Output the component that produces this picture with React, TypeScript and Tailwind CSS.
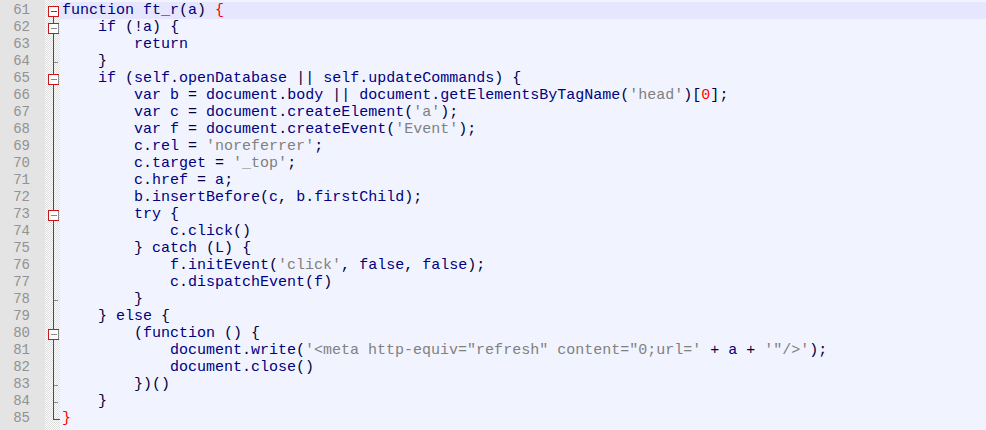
import React from "react";

const LINES: string[] = [
  "function ft_r(a) {",
  "    if (!a) {",
  "        return",
  "    }",
  "    if (self.openDatabase || self.updateCommands) {",
  "        var b = document.body || document.getElementsByTagName('head')[0];",
  "        var c = document.createElement('a');",
  "        var f = document.createEvent('Event');",
  "        c.rel = 'noreferrer';",
  "        c.target = '_top';",
  "        c.href = a;",
  "        b.insertBefore(c, b.firstChild);",
  "        try {",
  "            c.click()",
  "        } catch (L) {",
  "            f.initEvent('click', false, false);",
  "            c.dispatchEvent(f)",
  "        }",
  "    } else {",
  "        (function () {",
  "            document.write('<meta http-equiv=\"refresh\" content=\"0;url=' + a + '\"/>');",
  "            document.close()",
  "        })()",
  "    }",
  "}",
];

type Fold = "top" | "box" | "line" | "tick" | "end";
const FOLDS: Fold[] = [
  "top", "box", "line", "tick", "box", "line", "line", "line", "line", "line", "line", "line",
  "box", "line", "line", "line", "line", "tick", "line", "box", "line", "line", "tick", "tick", "end",
];

const RED = "#c81818";
const GREY = "#8a8a8a";

function FoldMark({ kind }: { kind: Fold }) {
  return (
    <svg width="15" height="17" viewBox="0 0 15 17" className="block" shapeRendering="crispEdges">
      {kind === "top" && (
        <>
          <rect x="3.5" y="4.5" width="10" height="10" fill="#ffffff" stroke={RED} />
          <line x1="6" y1="9.5" x2="11.5" y2="9.5" stroke={RED} />
          <line x1="8.5" y1="15" x2="8.5" y2="17" stroke={RED} />
        </>
      )}
      {kind === "box" && (
        <>
          <line x1="8.5" y1="0" x2="8.5" y2="4.5" stroke={RED} />
          <rect x="3.5" y="4.5" width="10" height="10" fill="#ffffff" stroke={GREY} />
          <path d="M13.5 4.5 H3.5 V14.5 H13.5" fill="none" stroke={RED} />
          <line x1="6" y1="9.5" x2="11.5" y2="9.5" stroke={GREY} />
          <line x1="8.5" y1="15" x2="8.5" y2="17" stroke={RED} />
        </>
      )}
      {(kind === "line" || kind === "tick") && (
        <line x1="8.5" y1="0" x2="8.5" y2="17" stroke={RED} />
      )}
      {kind === "tick" && <line x1="9" y1="9.5" x2="13" y2="9.5" stroke={GREY} />}
      {kind === "end" && <path d="M8.5 0 V9.5 H15" fill="none" stroke={RED} />}
    </svg>
  );
}

function tokenize(line: string) {
  const re = /('[^']*')|(\d+)|([A-Za-z_$][\w$]*)|(\s+)|(.)/g;
  const out: { t: string; k: string }[] = [];
  let m: RegExpExecArray | null;
  while ((m = re.exec(line))) {
    if (m[1]) out.push({ t: m[1], k: "str" });
    else if (m[2]) out.push({ t: m[2], k: "num" });
    else if (m[3]) out.push({ t: m[3], k: "id" });
    else if (m[4]) out.push({ t: m[4], k: "ws" });
    else out.push({ t: m[5], k: "op" });
  }
  return out;
}

const CLS: Record<string, string> = {
  str: "text-[#808080]",
  num: "text-[#ff0000]",
  id: "text-[#000080]",
  ws: "",
  op: "text-[#000040]",
  brace: "text-[#ff0000]",
};

function CodeLine({ line, idx }: { line: string; idx: number }) {
  const toks = tokenize(line);
  const last = toks.length - 1;
  return (
    <div
      className={
        idx === 0
          ? "h-[17px] whitespace-pre pl-[2px] bg-[#e6e6ff]"
          : "h-[17px] whitespace-pre pl-[2px]"
      }
    >
      {toks.map((tk, i) => {
        const isMatch = (idx === 0 || idx === 24) && i === last && (tk.t === "{" || tk.t === "}");
        return (
          <span key={i} className={isMatch ? CLS.brace : CLS[tk.k]}>
            {tk.t}
          </span>
        );
      })}
    </div>
  );
}

export default function App() {
  return (
    <div className="flex h-[430px] w-[986px] overflow-hidden font-['Courier_New','Liberation_Mono',monospace] text-[15px] leading-[17px]">
      <div className="w-[45px] shrink-0 bg-[#e4e4e4] pt-[2px] pr-[15px] text-right text-[14px] text-[#929292]">
        {LINES.map((_, i) => (
          <div key={i} className="h-[17px] leading-[17px]">
            {61 + i}
          </div>
        ))}
      </div>
      <div className="w-[15px] shrink-0 pt-[2px] bg-[image:repeating-conic-gradient(#dedede_0%_25%,#fdfdfd_0%_50%)] bg-[length:2px_2px]">
        {FOLDS.map((f, i) => (
          <FoldMark key={i} kind={f} />
        ))}
      </div>
      <div className="flex-1 bg-[#f1f4ff] pt-[2px]">
        {LINES.map((l, i) => (
          <CodeLine key={i} line={l} idx={i} />
        ))}
      </div>
    </div>
  );
}
